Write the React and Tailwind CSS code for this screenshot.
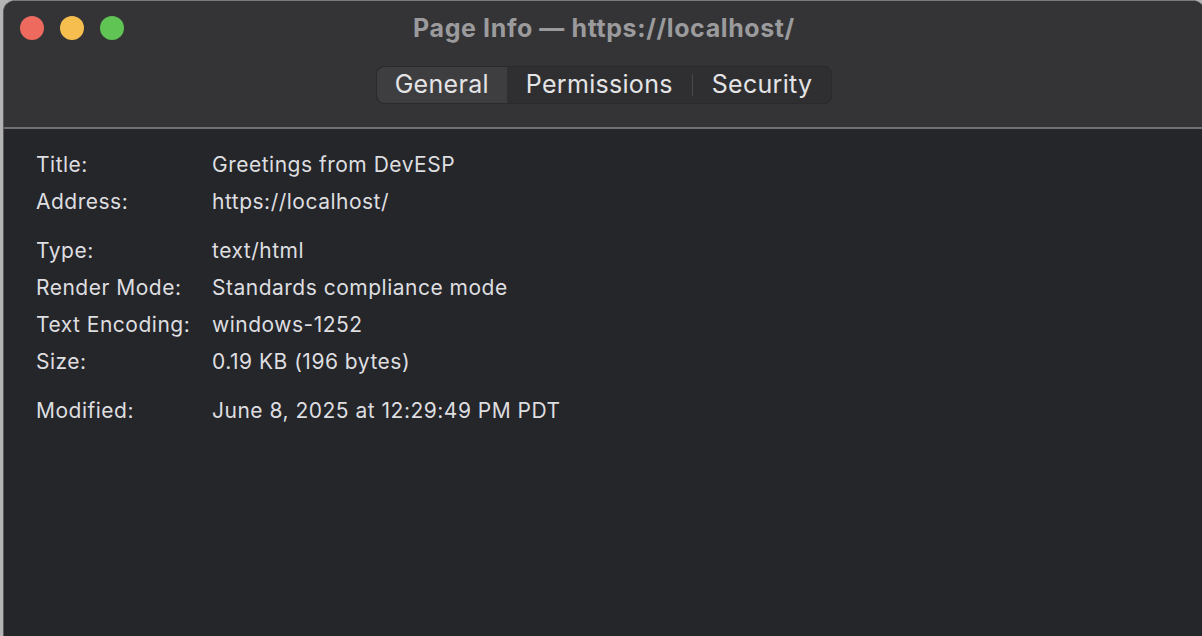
import React from "react";

const rows = [
  [
    ["Title:", "Greetings from DevESP"],
    ["Address:", "https://localhost/"],
  ],
  [
    ["Type:", "text/html"],
    ["Render Mode:", "Standards compliance mode"],
    ["Text Encoding:", "windows-1252"],
    ["Size:", "0.19 KB (196 bytes)"],
  ],
  [["Modified:", "June 8, 2025 at 12:29:49 PM PDT"]],
];

const tabs = ["General", "Permissions", "Security"];

export default function App() {
  return (
    <div
      className="h-[636px] w-[1202px] overflow-hidden bg-[#b4b4b4] pl-[3px]"
      style={{ fontFamily: "Inter, 'Noto Sans', sans-serif" }}
    >
      <div className="flex h-[640px] w-[1202px] flex-col overflow-hidden rounded-t-[12px] border border-[#5a5a5c] border-t-[#7a7a7c] bg-[#252629]">
        {/* title bar */}
        <div className="relative flex h-[126px] flex-col items-center bg-[#343436]">
          <div className="absolute left-[16px] top-[15px] flex gap-[16px]">
            <span className="h-[24px] w-[24px] rounded-full bg-[#ee6a5f]" />
            <span className="h-[24px] w-[24px] rounded-full bg-[#f5be4f]" />
            <span className="h-[24px] w-[24px] rounded-full bg-[#5fc454]" />
          </div>
          <div className="mt-[9px] text-[25px] font-bold tracking-[0.6px] text-[#9b9b9d]">
            Page Info — https://localhost/
          </div>
          <div className="mt-[18px] flex h-[38px] items-center rounded-[8px] border border-[#2a2a2c] bg-[#2f2f31] text-[25px] tracking-[0.3px] text-[#e4e4e6]">
            {tabs.map((t, i) => (
              <React.Fragment key={t}>
                {i === 2 && <span className="h-[22px] w-px bg-[#48484a]" />}
                <div
                  className={
                    i === 0
                      ? "flex h-full items-center rounded-l-[8px] bg-[#3e3e40] px-[18px]"
                      : "flex h-full items-center px-[19px]"
                  }
                >
                  {t}
                </div>
              </React.Fragment>
            ))}
          </div>
        </div>
        <div className="h-[2px] bg-[#707074]" />
        {/* body */}
        <div className="flex flex-col gap-[12px] px-[32px] pt-[17px] text-[21px] tracking-[0.5px] text-[#dedee0]">
          {rows.map((group, gi) => (
            <div key={gi} className="flex flex-col">
              {group.map(([k, v]) => (
                <div key={k} className="flex h-[37px] items-center">
                  <span className="w-[176px]">{k}</span>
                  <span>{v}</span>
                </div>
              ))}
            </div>
          ))}
        </div>
      </div>
    </div>
  );
}
